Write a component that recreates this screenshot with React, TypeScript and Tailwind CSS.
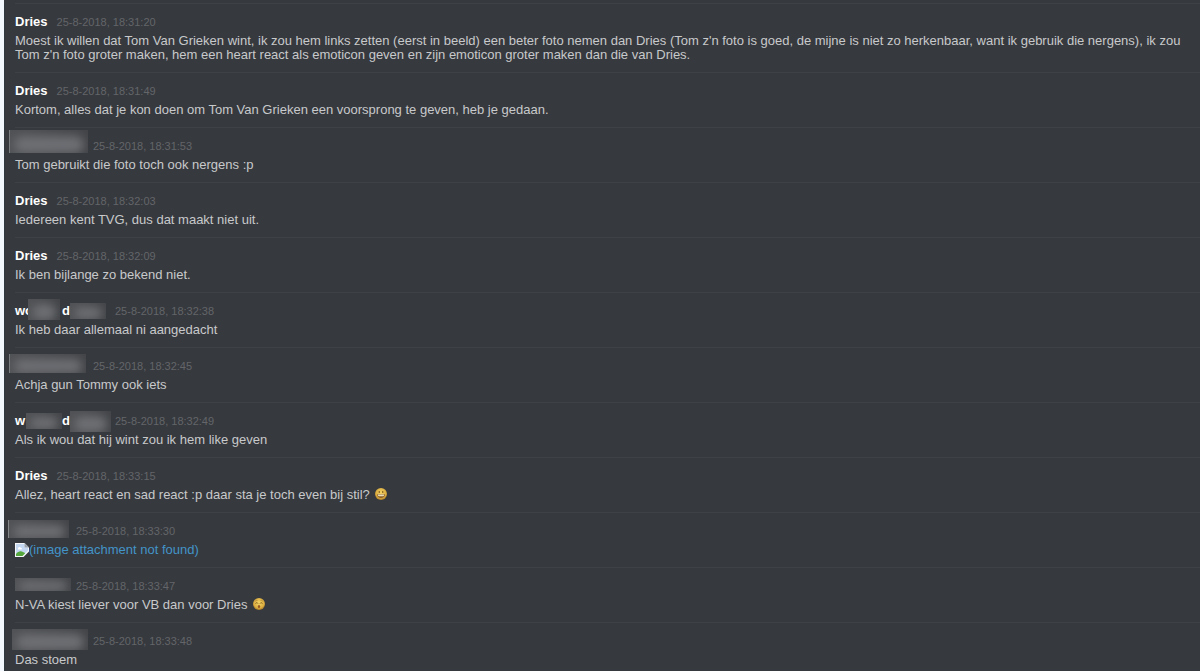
import type { ReactNode } from "react";

type Message = {
  name: ReactNode;
  time: string;
  body: ReactNode;
};

function Redaction({ className }: { className: string }) {
  return (
    <span className={`absolute overflow-hidden bg-linear-to-r from-[#505255] to-[#424448] ${className}`}>
      <span className="absolute inset-x-1 top-1/4 bottom-0 rounded-full bg-[#6e6f73] blur-[5px]" />
    </span>
  );
}

function HiddenName({ width, cover }: { width: string; cover: string }) {
  return (
    <span className={`relative block h-4 ${width}`}>
      <Redaction className={cover} />
    </span>
  );
}

function PartlyHiddenName({ start, first, second }: { start: string; first: string; second: string }) {
  return (
    <span className="relative flex h-4 w-[91px]">
      <span className="w-[47px]">{start}</span>
      <span>d</span>
      <Redaction className={first} />
      <Redaction className={second} />
    </span>
  );
}

function GrinEmoji() {
  return (
    <svg viewBox="0 0 24 24" className="ml-0.5 inline-block size-3 align-[-1px]" role="img" aria-label="grinning face">
      <defs>
        <radialGradient id="grin" cx="50%" cy="40%" r="60%">
          <stop offset="0" stopColor="#f3d565" />
          <stop offset="0.7" stopColor="#dcae42" />
          <stop offset="1" stopColor="#a87a28" />
        </radialGradient>
      </defs>
      <circle cx="12" cy="12" r="12" fill="url(#grin)" />
      <ellipse cx="8.500" cy="8" rx="1.3" ry="2.2" fill="#7a5218" />
      <ellipse cx="15.500" cy="8" rx="1.3" ry="2.2" fill="#7a5218" />
      <path d="M4 12.500h16c0 5-3.500 7.500-8 7.500s-8-2.500-8-7.500z" fill="#8a5e24" />
      <path d="M5.500 13h13c0 2-1 3.500-2 3.500h-9c-1 0-2-1.500-2-3.500z" fill="#e9dcb8" />
    </svg>
  );
}

function KissEmoji() {
  return (
    <svg viewBox="0 0 24 24" className="ml-0.5 inline-block size-3 align-[-1px]" role="img" aria-label="kissing face">
      <defs>
        <radialGradient id="kiss" cx="50%" cy="40%" r="60%">
          <stop offset="0" stopColor="#f3d565" />
          <stop offset="0.7" stopColor="#dcae42" />
          <stop offset="1" stopColor="#a87a28" />
        </radialGradient>
      </defs>
      <circle cx="12" cy="12" r="12" fill="url(#kiss)" />
      <path d="M4 7c1-2 3-3 5-2M20 7c-1-2-3-3-5-2" fill="none" stroke="#a87a28" strokeWidth="1.3" />
      <path d="M5 11c1-2 4-2 5 0M14 11c1-2 4-2 5 0" fill="none" stroke="#7a5218" strokeWidth="1.8" />
      <ellipse cx="12" cy="17" rx="2.3" ry="3" fill="#96581f" />
    </svg>
  );
}

function BrokenImage() {
  return (
    <svg viewBox="0 0 14 14" className="inline-block size-3.5 align-[-3px]" aria-hidden="true">
      <path d="M0 0h9.500L14 4.500V14H0z" fill="#f4f6f8" />
      <path d="M1 1h8.500v3.500H13V13H1z" fill="#c5d8f2" />
      <path d="M3 5.500c0-1.500 2-2 2.700-.8 1.300-.3 1.800 1.300.6 1.800H3.500C3 6.500 2.700 6 3 5.500z" fill="#fff" />
      <path d="M1 13V11c2-2.500 4.500-3.500 7-2l2 1v3z" fill="#55a63c" />
      <path d="M9.500 0L14 4.500H9.500z" fill="#9aa3ad" />
      <path d="M14 6.500L6.500 14H9L14 9z" fill="#f4f6f8" />
      <path d="M14 8.500V14H8.500z" fill="#36393e" />
    </svg>
  );
}

const messages: Message[] = [
  {
    name: "Dries",
    time: "25-8-2018, 18:31:20",
    body: "Moest ik willen dat Tom Van Grieken wint, ik zou hem links zetten (eerst in beeld) een beter foto nemen dan Dries (Tom z'n foto is goed, de mijne is niet zo herkenbaar, want ik gebruik die nergens), ik zou Tom z'n foto groter maken, hem een heart react als emoticon geven en zijn emoticon groter maken dan die van Dries.",
  },
  {
    name: "Dries",
    time: "25-8-2018, 18:31:49",
    body: "Kortom, alles dat je kon doen om Tom Van Grieken een voorsprong te geven, heb je gedaan.",
  },
  {
    name: <HiddenName width="w-[69px]" cover="-left-1.5 -top-2 h-[23px] w-[79px] border-l border-[#7b7e80]" />,
    time: "25-8-2018, 18:31:53",
    body: "Tom gebruikt die foto toch ook nergens :p",
  },
  { name: "Dries", time: "25-8-2018, 18:32:03", body: "Iedereen kent TVG, dus dat maakt niet uit." },
  { name: "Dries", time: "25-8-2018, 18:32:09", body: "Ik ben bijlange zo bekend niet." },
  {
    name: (
      <PartlyHiddenName
        start="wo"
        first="left-[13px] -top-1 h-[21px] w-8"
        second="left-[55px] top-0 h-4 w-9"
      />
    ),
    time: "25-8-2018, 18:32:38",
    body: "Ik heb daar allemaal ni aangedacht",
  },
  {
    name: <HiddenName width="w-[69px]" cover="-left-1.5 -top-1 h-[19px] w-[77px] border-l border-[#7b7e80]" />,
    time: "25-8-2018, 18:32:45",
    body: "Achja gun Tommy ook iets",
  },
  {
    name: (
      <PartlyHiddenName
        start="w"
        first="left-[11px] top-0 h-4 w-9"
        second="left-[55px] -top-0.5 h-[21px] w-[41px]"
      />
    ),
    time: "25-8-2018, 18:32:49",
    body: "Als ik wou dat hij wint zou ik hem like geven",
  },
  {
    name: "Dries",
    time: "25-8-2018, 18:33:15",
    body: (
      <>
        Allez, heart react en sad react :p daar sta je toch even bij stil? <GrinEmoji />
      </>
    ),
  },
  {
    name: <HiddenName width="w-[52px]" cover="-left-[7px] -top-[3px] h-[18px] w-[61px] border-l border-[#85888a]" />,
    time: "25-8-2018, 18:33:30",
    body: (
      <a href="#attachment" className="text-[#4394c8]">
        <BrokenImage />
        (image attachment not found)
      </a>
    ),
  },
  {
    name: <HiddenName width="w-[52px]" cover="left-0 top-0 h-[13px] w-14" />,
    time: "25-8-2018, 18:33:47",
    body: (
      <>
        N-VA kiest liever voor VB dan voor Dries <KissEmoji />
      </>
    ),
  },
  {
    name: <HiddenName width="w-[69px]" cover="-left-[3px] -top-1 h-[21px] w-[76px]" />,
    time: "25-8-2018, 18:33:48",
    body: "Das stoem",
  },
];

export default function App() {
  return (
    <main className="h-screen overflow-hidden border-l-4 border-[#f3f8ff] bg-[#36393e] pt-[3px] font-['Liberation_Sans',Arial,sans-serif] text-[13px] text-[#c8c9cb]">
      <ol className="border-l border-[#303840] pl-2.5">
        {messages.map((message) => (
          <li key={message.time} className="flex flex-col gap-1 border-t border-[#3e4146] py-2.5">
            <div className="flex h-4 items-center gap-[9px] leading-4">
              <span className="font-bold text-white">{message.name}</span>
              <time className="text-[11px] text-[#636569]">{message.time}</time>
            </div>
            <p className="min-h-3.5 pr-2 leading-[14px]">{message.body}</p>
          </li>
        ))}
      </ol>
    </main>
  );
}
